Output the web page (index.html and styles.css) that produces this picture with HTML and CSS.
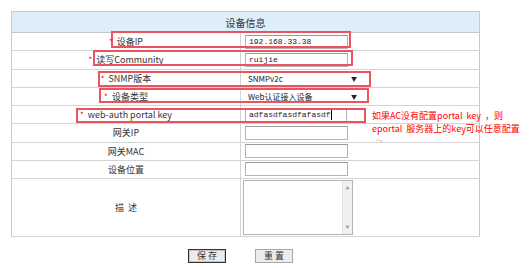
FILE: index.html
```html
<!DOCTYPE html>
<html>
<head>
<meta charset="utf-8">
<link rel="stylesheet" href="styles.css">
</head>
<body>
<div class="page">
<table class="info">
  <tr><th colspan="2">设备信息</th></tr>
  <tr>
    <td class="label"><span class="star">*</span> 设备IP</td>
    <td class="value"><input class="box" type="text" value="192.168.33.38"></td>
  </tr>
  <tr>
    <td class="label"><span class="star">*</span> 读写Community</td>
    <td class="value"><input class="box" type="text" value="ruijie"></td>
  </tr>
  <tr>
    <td class="label"><span class="star">*</span> SNMP版本</td>
    <td class="value"><div class="pick"><span>SNMPv2c</span><span class="arrow">▼</span></div></td>
  </tr>
  <tr>
    <td class="label"><span class="star">*</span> 设备类型</td>
    <td class="value"><div class="pick"><span>Web认证接入设备</span><span class="arrow">▼</span></div></td>
  </tr>
  <tr>
    <td class="label"><span class="star">*</span> web-auth portal key</td>
    <td class="value"><div class="box keybox">adfasdfasdfafasdf<span class="caret"></span></div></td>
  </tr>
  <tr>
    <td class="label">网关IP</td>
    <td class="value"><input class="box" type="text"></td>
  </tr>
  <tr>
    <td class="label">网关MAC</td>
    <td class="value"><input class="box" type="text"></td>
  </tr>
  <tr>
    <td class="label">设备位置</td>
    <td class="value"><input class="box" type="text"></td>
  </tr>
  <tr class="tall">
    <td class="label">描&nbsp;&nbsp;述</td>
    <td class="value">
      <div class="memo">
        <textarea></textarea>
        <div class="bar"><span>▲</span><span>▼</span></div>
      </div>
    </td>
  </tr>
</table>

<div class="buttons">
  <button class="btn save">保&nbsp;存</button>
  <button class="btn">重&nbsp;置</button>
</div>

<!-- red highlight marks drawn over the form -->
<div class="mark m1"></div>
<div class="mark m2"></div>
<div class="mark m3"></div>
<div class="mark m4"></div>
<div class="mark m5"></div>
<div class="note">
  <div>如果AC没有配置portal&nbsp;&nbsp;key&nbsp;&nbsp;，则</div>
  <div>eportal&nbsp;&nbsp;服务器上的key可以任意配置</div>
  <div class="dash">〜</div>
</div>
</div>
</body>
</html>
```

FILE: styles.css
```css
* {box-sizing: border-box;}

body {
  margin: 0;
  background: #fff;
  font-family: "Noto Sans CJK SC", "Liberation Sans", sans-serif;
  color: #333;
}

.page {
  position: relative;
  width: 532px;
  height: 268px;
  padding: 11px 0 0 11px;
}

.info {
  width: 469px;
  border-collapse: collapse;
  border: 1px solid #c8c8c8;
  font-size: 9px;
}

.info th {
  height: 21px;
  background: #ddeefa;
  font-weight: normal;
  font-size: 10px;
  color: #333;
  border-bottom: 1px solid #c8c8c8;
  padding: 0;
}

.info td {
  height: 18.25px;
  padding: 0;
  border-bottom: 1px solid #d4d4d4;
}

.info .label {
  width: 229px;
  text-align: center;
  border-right: 1px solid #d4d4d4;
}

.info .value {
  padding-left: 4px;
}

.star {
  color: #c00;
  font-size: 8px;
  margin-right: 2px;
}

.box {
  display: block;
  width: 103px;
  height: 14px;
  border: 1px solid #b4b4b4;
  border-top-color: #9a9a9a;
  padding: 0 3px;
  font-family: "Liberation Mono", monospace;
  font-size: 8px;
  line-height: 12px;
  color: #222;
  background: #fff;
}

.keybox {
  width: 102px;
  white-space: nowrap;
  overflow: hidden;
}

.caret {
  display: inline-block;
  width: 1px;
  height: 10px;
  background: #000;
  vertical-align: middle;
}

.pick {
  display: flex;
  justify-content: space-between;
  align-items: center;
  width: 115px;
  height: 14px;
  padding: 0 3px;
  font-size: 8px;
  color: #222;
}

.pick .arrow {
  font-size: 6px;
}

.tall td {
  height: 58px;
}

.memo {
  display: flex;
  width: 110px;
  height: 55px;
  margin-left: -2px;
  border: 1px solid #b4b4b4;
}

.memo textarea {
  flex: 1;
  border: none;
  resize: none;
  outline: none;
}

.bar {
  width: 10px;
  background: #f0f0f0;
  border-left: 1px solid #e4e4e4;
  display: flex;
  flex-direction: column;
  justify-content: space-between;
  align-items: center;
  font-size: 4px;
  color: #999;
  padding: 4px 0;
}

.buttons {
  display: flex;
  gap: 29px;
  padding: 12px 0 0 177px;
}

.btn {
  width: 38px;
  height: 14px;
  padding: 0;
  font-family: "Noto Sans CJK SC", sans-serif;
  font-size: 9px;
  line-height: 12px;
  color: #333;
  background: #ececec;
  border: 1px solid #a8a8a8;
}

.btn.save {
  border: 1px solid #333;
  box-shadow: inset 0 0 0 1px #c4c4c4;
}

.mark {
  position: absolute;
  border: 2px solid #e9545f;
}

.m1 {left: 111px; top: 31px; width: 240px; height: 17px;}
.m2 {left: 93px; top: 50px; width: 260px; height: 16px;}
.m3 {left: 98px; top: 71px; width: 273px; height: 16px;}
.m4 {left: 99px; top: 88px; width: 270px; height: 15px;}
.m5 {left: 76px; top: 108px; width: 290px; height: 15px;}

.note {
  position: absolute;
  left: 372px;
  top: 109px;
  font-size: 9px;
  line-height: 13px;
  color: #f00;
  white-space: nowrap;
}

.note .dash {
  margin-left: 4px;
  color: #f7a0a0;
  font-size: 7px;
  line-height: 10px;
}
```
